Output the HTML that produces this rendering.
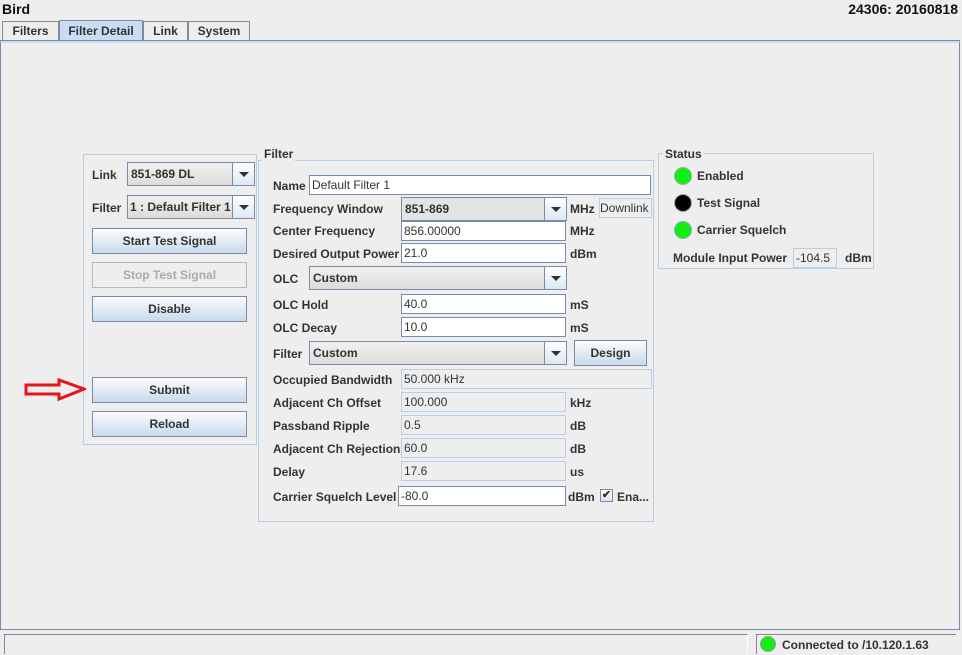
<!DOCTYPE html>
<html><head><meta charset="utf-8"><style>
*{box-sizing:border-box;margin:0;padding:0}
body{width:962px;height:655px;background:#eeeeee;font:bold 12px "Liberation Sans",sans-serif;color:#333;position:relative;overflow:hidden}
.a{position:absolute;white-space:nowrap}
.lbl{position:absolute;white-space:nowrap;line-height:14px}
.tf{position:absolute;background:#fff;border:1px solid #7a8aa8;font-weight:normal;padding-left:2px;line-height:19px;height:20px;color:#333}
.ro{position:absolute;background:#eeeeee;border:1px solid #b8cfe5;font-weight:normal;padding-left:2px;line-height:19px;height:20px;color:#333}
.cb{position:absolute;border:1px solid #7a8aa8;background:linear-gradient(#f2f2f2,#dcdcdc);height:24px;padding-left:3px;line-height:22px}
.cb .ar{position:absolute;right:0;top:0;width:22px;height:22px;border-left:1px solid #7a8aa8;background:linear-gradient(#fff,#dde8f3)}
.cb .ar:after{content:"";position:absolute;left:6px;top:9px;border-left:5px solid transparent;border-right:5px solid transparent;border-top:5px solid #333}
.btn{position:absolute;border:1px solid #7a8aa8;background:linear-gradient(#fbfcfd,#dde8f3 60%,#c9d9ea);text-align:center;line-height:24px;height:26px}
.box{position:absolute;border:1px solid #b8cfe5}
.led{position:absolute;width:18px;height:18px;border-radius:50%;border:1px solid #9ab}
</style></head><body>
<div class="a" style="left:2px;top:1px;font-size:14px;color:#111">Bird</div>
<div class="a" style="right:4px;top:1px;font-size:14px;color:#111">24306: 20160818</div>
<div class="a" style="left:2px;top:21px;width:57px;height:20px;border:1px solid #8a8a8a;border-bottom:none;background:#eee;text-align:center;line-height:18px">Filters</div>
<div class="a" style="left:59px;top:20px;width:84px;height:22px;border:1px solid #7a8aa8;border-bottom:none;background:#c8ddf2;text-align:center;line-height:20px">Filter Detail</div>
<div class="a" style="left:143px;top:21px;width:45px;height:20px;border:1px solid #8a8a8a;border-bottom:none;background:#eee;text-align:center;line-height:18px">Link</div>
<div class="a" style="left:188px;top:21px;width:62px;height:20px;border:1px solid #8a8a8a;border-bottom:none;background:#eee;text-align:center;line-height:18px">System</div>
<div class="a" style="left:0;top:40px;width:960px;height:590px;border:1px solid #7a8aa8;border-top:3px solid #c8ddf2"></div>
<div class="a" style="left:0;top:40px;width:960px;height:1px;background:#7a8aa8"></div>

<div class="box" style="left:83px;top:154px;width:174px;height:291px"></div>
<div class="lbl" style="left:92px;top:168px">Link</div>
<div class="cb" style="left:127px;top:162px;width:128px">851-869 DL<div class="ar"></div></div>
<div class="lbl" style="left:92px;top:201px">Filter</div>
<div class="cb" style="left:127px;top:195px;width:128px;padding-left:2px;overflow:hidden">1 : Default Filter 1<div class="ar"></div></div>
<div class="btn" style="left:92px;top:228px;width:155px">Start Test Signal</div>
<div class="btn" style="left:92px;top:262px;width:155px;background:#eee;border-color:#b8b8b8;color:#aaa">Stop Test Signal</div>
<div class="btn" style="left:92px;top:296px;width:155px">Disable</div>
<div class="btn" style="left:92px;top:377px;width:155px">Submit</div>
<div class="btn" style="left:92px;top:411px;width:155px">Reload</div>
<svg class="a" style="left:24px;top:378px" width="62" height="24"><path d="M2 7 H35 V2 L60 11 L35 21 V16 H2 Z" fill="none" stroke="#e8141c" stroke-width="3"/></svg>

<div class="box" style="left:258px;top:160px;width:396px;height:362px"></div>
<div class="lbl" style="left:262px;top:147px;background:#eee;padding:0 2px">Filter</div>
<div class="lbl" style="left:273px;top:179px">Name</div>
<div class="tf" style="left:309px;top:175px;width:342px">Default Filter 1</div>
<div class="lbl" style="left:273px;top:202px">Frequency Window</div>
<div class="cb" style="left:401px;top:197px;width:166px;background:#e4e4e4">851-869<div class="ar"></div></div>
<div class="lbl" style="left:570px;top:202px">MHz</div>
<div class="ro" style="left:599px;top:198px;width:53px;overflow:hidden;padding-left:0">Downlink</div>
<div class="lbl" style="left:273px;top:224px">Center Frequency</div>
<div class="tf" style="left:401px;top:221px;width:165px">856.00000</div>
<div class="lbl" style="left:570px;top:224px">MHz</div>
<div class="lbl" style="left:273px;top:247px">Desired Output Power</div>
<div class="tf" style="left:401px;top:243px;width:165px">21.0</div>
<div class="lbl" style="left:570px;top:247px">dBm</div>
<div class="lbl" style="left:273px;top:272px">OLC</div>
<div class="cb" style="left:309px;top:266px;width:258px">Custom<div class="ar"></div></div>
<div class="lbl" style="left:273px;top:298px">OLC Hold</div>
<div class="tf" style="left:401px;top:294px;width:165px">40.0</div>
<div class="lbl" style="left:570px;top:298px">mS</div>
<div class="lbl" style="left:273px;top:321px">OLC Decay</div>
<div class="tf" style="left:401px;top:317px;width:165px">10.0</div>
<div class="lbl" style="left:570px;top:321px">mS</div>
<div class="lbl" style="left:273px;top:347px">Filter</div>
<div class="cb" style="left:309px;top:341px;width:258px">Custom<div class="ar"></div></div>
<div class="btn" style="left:574px;top:340px;width:73px">Design</div>
<div class="lbl" style="left:273px;top:373px">Occupied Bandwidth</div>
<div class="ro" style="left:401px;top:369px;width:251px">50.000 kHz</div>
<div class="lbl" style="left:273px;top:396px">Adjacent Ch Offset</div>
<div class="ro" style="left:401px;top:392px;width:165px">100.000</div>
<div class="lbl" style="left:570px;top:396px">kHz</div>
<div class="lbl" style="left:273px;top:419px">Passband Ripple</div>
<div class="ro" style="left:401px;top:415px;width:165px">0.5</div>
<div class="lbl" style="left:570px;top:419px">dB</div>
<div class="lbl" style="left:273px;top:442px">Adjacent Ch Rejection</div>
<div class="ro" style="left:401px;top:438px;width:165px">60.0</div>
<div class="lbl" style="left:570px;top:442px">dB</div>
<div class="lbl" style="left:273px;top:465px">Delay</div>
<div class="ro" style="left:401px;top:461px;width:165px">17.6</div>
<div class="lbl" style="left:570px;top:465px">us</div>
<div class="lbl" style="left:273px;top:490px">Carrier Squelch Level</div>
<div class="tf" style="left:398px;top:486px;width:168px">-80.0</div>
<div class="lbl" style="left:568px;top:490px">dBm</div>
<div class="a" style="left:600px;top:489px;width:13px;height:13px;border:1px solid #7a8aa8;background:linear-gradient(#fff,#d8e4f0);font-size:11px;line-height:11px;text-align:center">✔</div>
<div class="lbl" style="left:617px;top:490px">Ena...</div>

<div class="box" style="left:658px;top:153px;width:216px;height:116px"></div>
<div class="lbl" style="left:663px;top:147px;background:#eee;padding:0 2px">Status</div>
<div class="led" style="left:674px;top:167px;background:#11ee11"></div>
<div class="lbl" style="left:697px;top:169px">Enabled</div>
<div class="led" style="left:674px;top:194px;background:#000"></div>
<div class="lbl" style="left:697px;top:196px">Test Signal</div>
<div class="led" style="left:674px;top:221px;background:#11ee11"></div>
<div class="lbl" style="left:697px;top:223px">Carrier Squelch</div>
<div class="lbl" style="left:673px;top:251px">Module Input Power</div>
<div class="ro" style="left:793px;top:248px;width:44px">-104.5</div>
<div class="lbl" style="left:845px;top:251px">dBm</div>

<div class="a" style="left:4px;top:634px;width:744px;height:20px;border-top:1px solid #888;border-left:1px solid #888;border-right:1px solid #fff;background:#eee"></div>
<div class="a" style="left:756px;top:634px;width:200px;height:20px;border-top:1px solid #888;border-left:1px solid #888;background:#eee"></div>
<div class="led" style="left:760px;top:636px;width:16px;height:16px;background:#11ee11;border-color:#999"></div>
<div class="lbl" style="left:782px;top:638px">Connected to /10.120.1.63</div>
</body></html>
